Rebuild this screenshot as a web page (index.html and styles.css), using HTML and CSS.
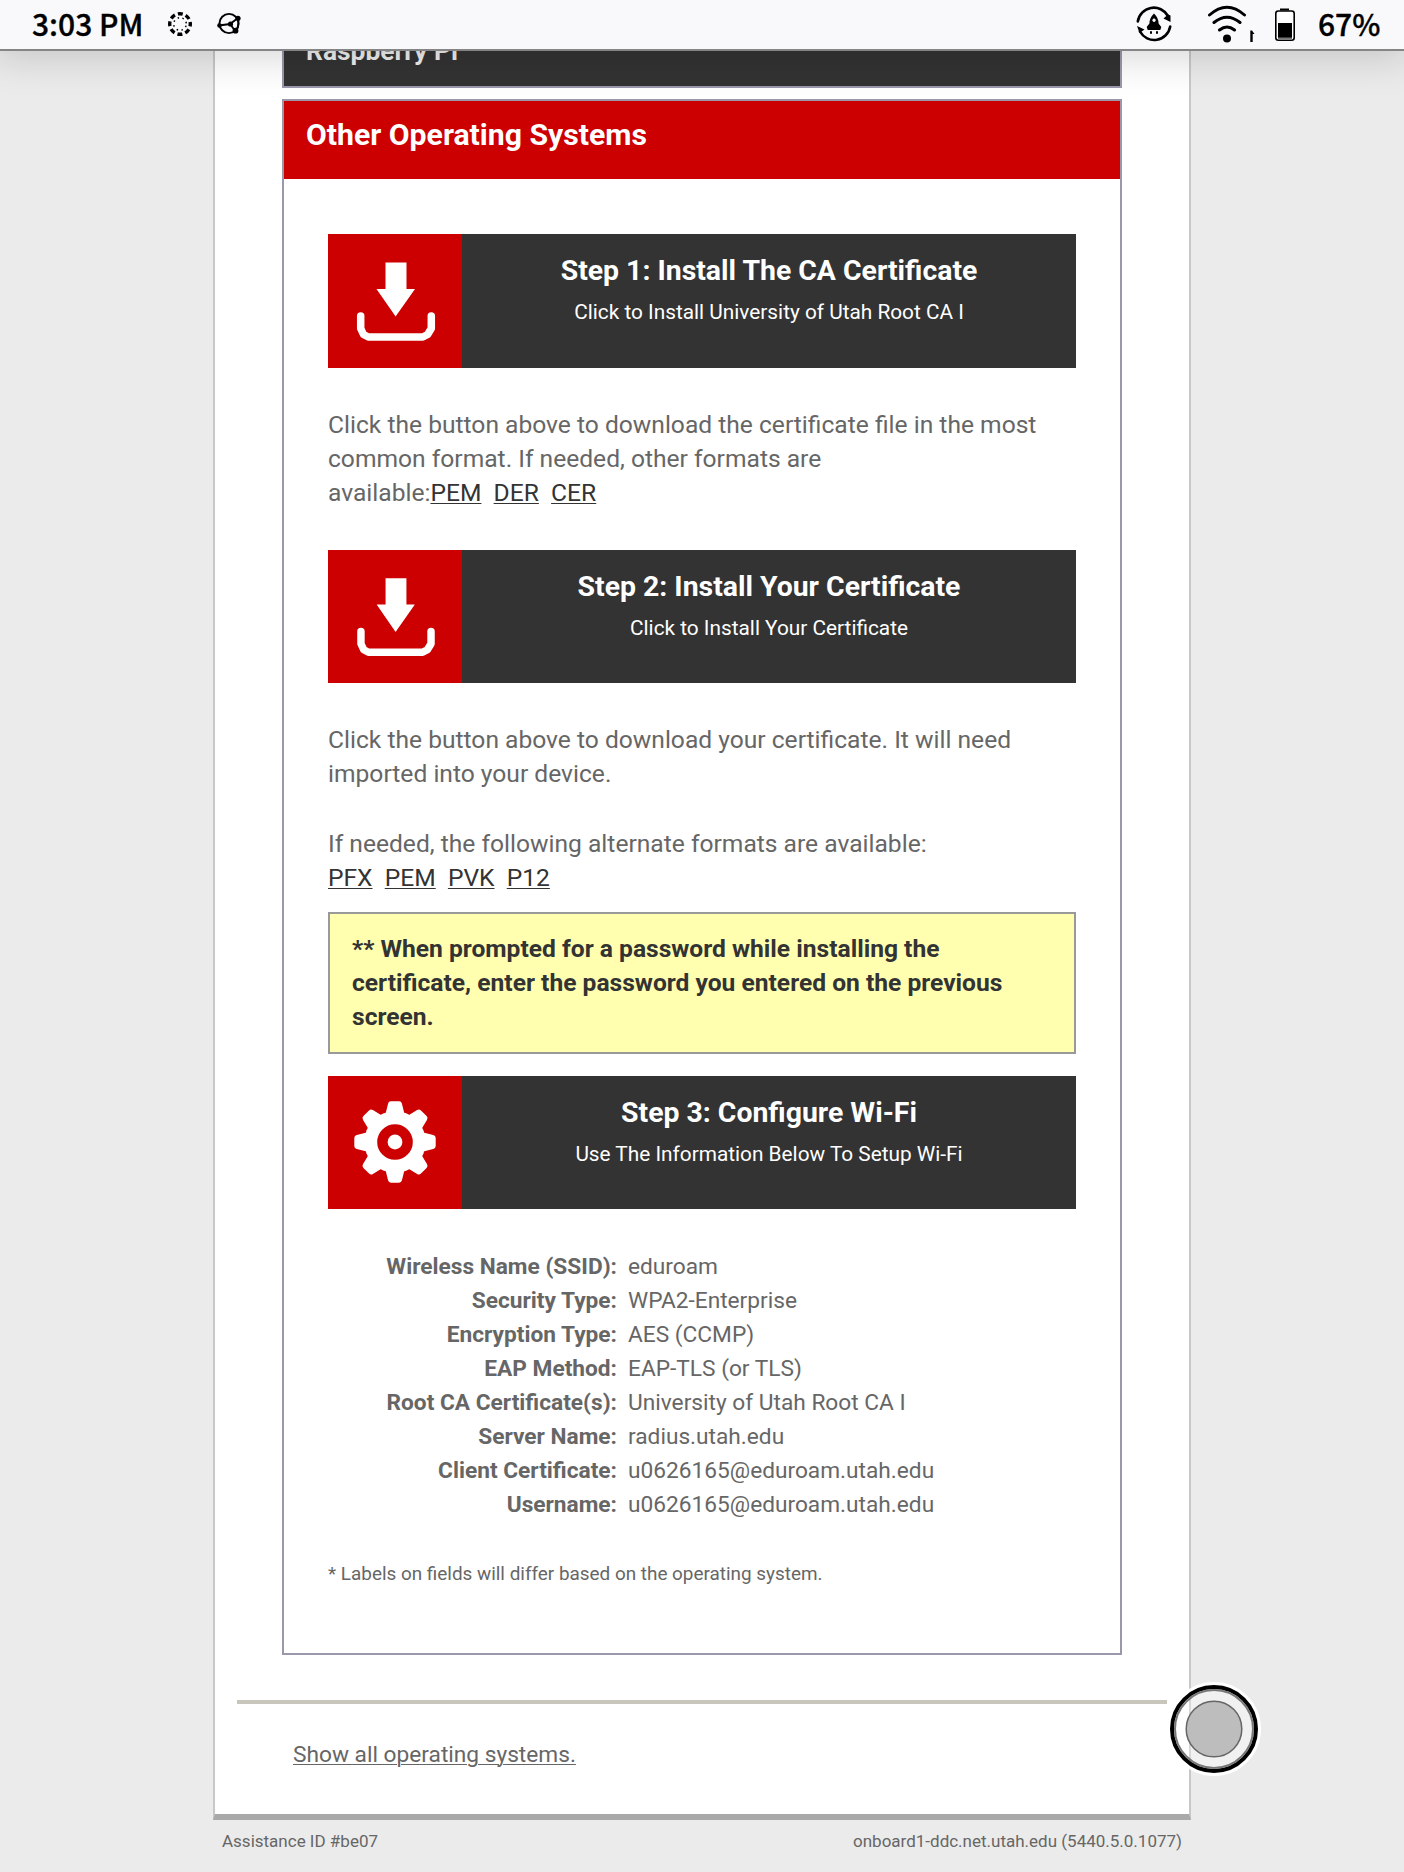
FILE: index.html
```html
<!DOCTYPE html>
<html lang="en">
<head>
<meta charset="utf-8">
<title>Onboarding</title>
<link rel="stylesheet" href="styles.css">
</head>
<body>
<svg class="defs" aria-hidden="true">
  <symbol id="download" viewBox="0 0 134 134">
    <path fill="#fff" d="M57.500 28.500h21v26.500h8.500L67.600 82.500 48.500 55h9z"/>
    <path fill="none" stroke="#fff" stroke-width="7.500" stroke-linecap="round" stroke-linejoin="round" d="M32.700 82v12.500l2.800 6 4.800 2.500h54.500l4.800-2.500 3.700-6V82"/>
  </symbol>
</svg>
<header class="status">
  <span class="status-text clock">3:03 PM</span>
  <svg class="ic canvas" width="24" height="24" viewBox="0 0 24 24">
    <circle cx="12" cy="12" r="10.300" fill="none" stroke="#000" stroke-width="3.400" stroke-dasharray="5 3.090" stroke-dashoffset="2.500"/>
    <circle cx="12" cy="12" r="6.300" fill="none" stroke="#000" stroke-width="1.500" stroke-dasharray="1.500 3.448" stroke-dashoffset="-1.720"/>
  </svg>
  <svg class="ic graph" width="24" height="24" viewBox="0 0 24 24">
    <g fill="none" stroke="#000" stroke-width="1.900"><circle cx="12" cy="11.500" r="9.600"/><path d="M2 13.500l11-1.500 8-6M13 12l6 8M21 6q1.500 7-2 13"/></g>
    <circle cx="2.500" cy="13.500" r="2.300"/><circle cx="13.500" cy="12" r="2.600"/><circle cx="21" cy="6.300" r="2.600"/><circle cx="18.500" cy="18.700" r="2.900"/>
  </svg>
  <span class="spacer"></span>
  <svg class="ic rocket" width="36" height="36" viewBox="0 0 36 36">
    <g fill="none" stroke="#000" stroke-width="2.600" stroke-linecap="round"><path d="M1.800 15.500A16.200 16.200 0 0 1 32 10M34.200 20.500A16.200 16.200 0 0 1 4 25.500"/></g>
    <path d="M34.500 9.500v6.500l-7-3.500 4.500-4zM1 20l7.500 3.500-5 3.500z"/>
    <path fill-rule="evenodd" d="M18 7.500q4.600 4.500 4.600 10l2.700 3.500-1 3H11.700l-1-3 2.700-3.500q0-5.500 4.600-10zM18 12.500a1.700 1.700 0 1 0 .1 0z"/>
    <path d="M14 25.200h2v2.600h-2zM20 25.200h2v2.600h-2z"/>
  </svg>
  <svg class="ic wifi" width="48" height="38" viewBox="0 0 48 38">
    <g fill="none" stroke="#000" stroke-width="3" stroke-linecap="round"><path d="M1.500 10q17.500-15.500 35 0M6 17.500q13-10.500 26 0M11.500 25q7.500-6 15 0"/></g>
    <circle cx="19" cy="33.500" r="4"/>
    <path d="M42.300 25.500h1.700l2.500 3.500h-1.800v8h-2.400z"/>
  </svg>
  <svg class="ic battery" width="20" height="33" viewBox="0 0 20 33">
    <path d="M5 .5h9v2H5z"/><rect x=".8" y="3" width="18.400" height="29.200" rx="2.500" fill="#fff" stroke="#000" stroke-width="1.600"/>
    <path d="M3 15h14v15H3z"/><path fill="#777" d="M3 29.500h14v1.500H3z"/>
  </svg>
  <span class="status-text pct">67%</span>
</header>
<main class="page">
  <section class="panel previous"><h2>Raspberry Pi</h2></section>
  <section class="panel current">
    <h2>Other Operating Systems</h2>
    <div class="content">
      <a class="step"><svg class="step-icon"><use href="#download"/></svg>
        <div class="step-text"><strong>Step 1: Install The CA Certificate</strong><span>Click to Install University of Utah Root CA I</span></div></a>
      <p class="first">Click the button above to download the certificate file in the most<br>common format. If needed, other formats are<br>available:<a>PEM</a>&nbsp; <a>DER</a>&nbsp; <a>CER</a></p>
      <a class="step second"><svg class="step-icon"><use href="#download"/></svg>
        <div class="step-text"><strong>Step 2: Install Your Certificate</strong><span>Click to Install Your Certificate</span></div></a>
      <p class="desc">Click the button above to download your certificate. It will need<br>imported into your device.</p>
      <p class="formats">If needed, the following alternate formats are available:<br><a>PFX</a>&nbsp; <a>PEM</a>&nbsp; <a>PVK</a>&nbsp; <a>P12</a></p>
      <div class="notice">** When prompted for a password while installing the<br>certificate, enter the password you entered on the previous<br>screen.</div>
      <div class="step third">
        <svg class="step-icon" viewBox="0 0 134 134">
          <g fill="#fff"><circle cx="67" cy="66.500" r="31"/>
            <g id="teeth"><path id="t" d="M57 40l3-12q.5-2.500 3-2.500h8q2.500 0 3 2.500l3 12z"/><use href="#t" transform="rotate(90 67 66.500)"/><use href="#t" transform="rotate(180 67 66.500)"/><use href="#t" transform="rotate(270 67 66.500)"/></g>
            <use href="#teeth" transform="rotate(45 67 66.500)"/></g>
          <circle cx="67" cy="66.500" r="12.700" fill="none" stroke="#c00" stroke-width="10.500"/>
        </svg>
        <div class="step-text"><strong>Step 3: Configure Wi-Fi</strong><span>Use The Information Below To Setup Wi-Fi</span></div></div>
      <dl class="settings">
        <dt>Wireless Name (SSID):</dt><dd>eduroam</dd>
        <dt>Security Type:</dt><dd>WPA2-Enterprise</dd>
        <dt>Encryption Type:</dt><dd>AES (CCMP)</dd>
        <dt>EAP Method:</dt><dd>EAP-TLS (or TLS)</dd>
        <dt>Root CA Certificate(s):</dt><dd>University of Utah Root CA I</dd>
        <dt>Server Name:</dt><dd>radius.utah.edu</dd>
        <dt>Client Certificate:</dt><dd>u0626165@eduroam.utah.edu</dd>
        <dt>Username:</dt><dd>u0626165@eduroam.utah.edu</dd>
      </dl>
      <p class="footnote">* Labels on fields will differ based on the operating system.</p>
    </div>
  </section>
  <hr>
  <a class="show-all">Show all operating systems.</a>
</main>
<footer class="footer"><span>Assistance ID #be07</span><span>onboard1-ddc.net.utah.edu (5440.5.0.1077)</span></footer>
<svg class="navball" width="96" height="96" viewBox="0 0 96 96">
  <circle cx="48" cy="48" r="38" fill="#fff" fill-opacity=".3"/>
  <circle cx="48" cy="48" r="45.500" fill="none" stroke="#fff" stroke-width="3"/>
  <circle cx="48" cy="48" r="42" fill="none" stroke="#000" stroke-width="4"/>
  <circle cx="48" cy="48" r="39" fill="none" stroke="#777" stroke-width="2"/>
  <circle cx="48" cy="48" r="27.800" fill="#bdbdbd" stroke="#666" stroke-width="1.500"/>
</svg>
</body>
</html>
```

FILE: styles.css
```css
* { box-sizing: border-box; }
html { overflow: hidden; }
body {
  margin: 0;
  height: 1872px;
  overflow: hidden;
  background: #ebebeb;
  color: #666;
  font: 24.6px/34px Roboto, sans-serif;
}
p, h2, dl, dd { margin: 0; }
a { color: #333; text-decoration: underline; text-decoration-thickness: 1px; text-underline-offset: 2px; }
.defs { position: absolute; width: 0; height: 0; }

.status {
  position: relative;
  z-index: 2;
  display: flex;
  height: 51px;
  padding: 0 24px 0 32px;
  background: #f9f9fc;
  border-bottom: 2px solid #858585;
  box-shadow: 0 0 40px 6px rgba(0, 0, 0, .17);
  color: #000;
}
.status-text { font: 500 30px/47px "Noto Sans CJK SC", sans-serif; white-space: nowrap; -webkit-text-stroke: .35px #000; }
.clock { width: 136px; }
.spacer { flex: 1; }
.ic { flex: none; }
.canvas { margin-top: 12px; }
.graph { margin: 12px 0 0 25px; }
.rocket { margin: 6px 36px 0 0; }
.wifi { margin: 5px 19px 0 0; }
.battery { margin: 8px 23px 0 0; }
.pct { width: 62px; }

.page {
  width: 978px;
  height: 1769px;
  margin-left: 213px;
  padding: 0 22px;
  background: #fff;
  border: solid #c8c8c8;
  border-width: 0 2px;
  border-bottom: 6px solid #a9a9a9;
}
.panel { width: 840px; margin-left: 45px; border: 2px solid #9a98aa; }
h2 { padding: 17px 22px 0; color: #fff; font-size: 30.2px; font-weight: 700; line-height: 34px; }
.previous { height: 37px; border-top: 0; background: #333; overflow: hidden; }
.previous h2 { margin-top: -34px; color: #eee; font-size: 26.4px; }
.current { height: 1556px; margin-top: 11px; }
.current h2 { height: 78px; background: #c00; }
.content { padding: 55px 44px 0; }

.step { display: flex; height: 134px; background: #333; color: #fff; text-decoration: none; }
.second, .third { height: 133px; }
.step-icon { flex: none; width: 134px; height: 100%; background: #c00; }
.step-text { flex: 1; display: flex; flex-direction: column; align-items: center; padding-top: 20px; }
.step-text strong { font-size: 28.4px; line-height: 34px; }
.step-text span { margin-top: 7px; font-size: 20.8px; line-height: 34px; }
.first { margin: 40px 0 40px; }
.desc { margin-top: 40px; }
.formats { margin-top: 36px; }
.notice {
  height: 142px;
  margin: 17px 0 22px;
  padding: 18px 22px;
  background: #ffffaf;
  border: 2px solid #999;
  color: #333;
  font-weight: 700;
}
.settings {
  display: grid;
  grid-template-columns: 289px 1fr;
  column-gap: 11px;
  margin-top: 41px;
  font-size: 22.7px;
}
.settings dt { font-weight: 700; text-align: right; }
.footnote { margin-top: 35px; font-size: 18.9px; }
hr { height: 4px; margin: 45px 0 0; border: 0; background: #c8c5bd; }
.show-all { display: block; margin: 34px 0 0 56px; color: #666; font-size: 22.7px; }
.footer { display: flex; justify-content: space-between; padding: 4px 222px 0; font-size: 17px; }
.navball { position: absolute; left: 1166px; top: 1681px; }
```
